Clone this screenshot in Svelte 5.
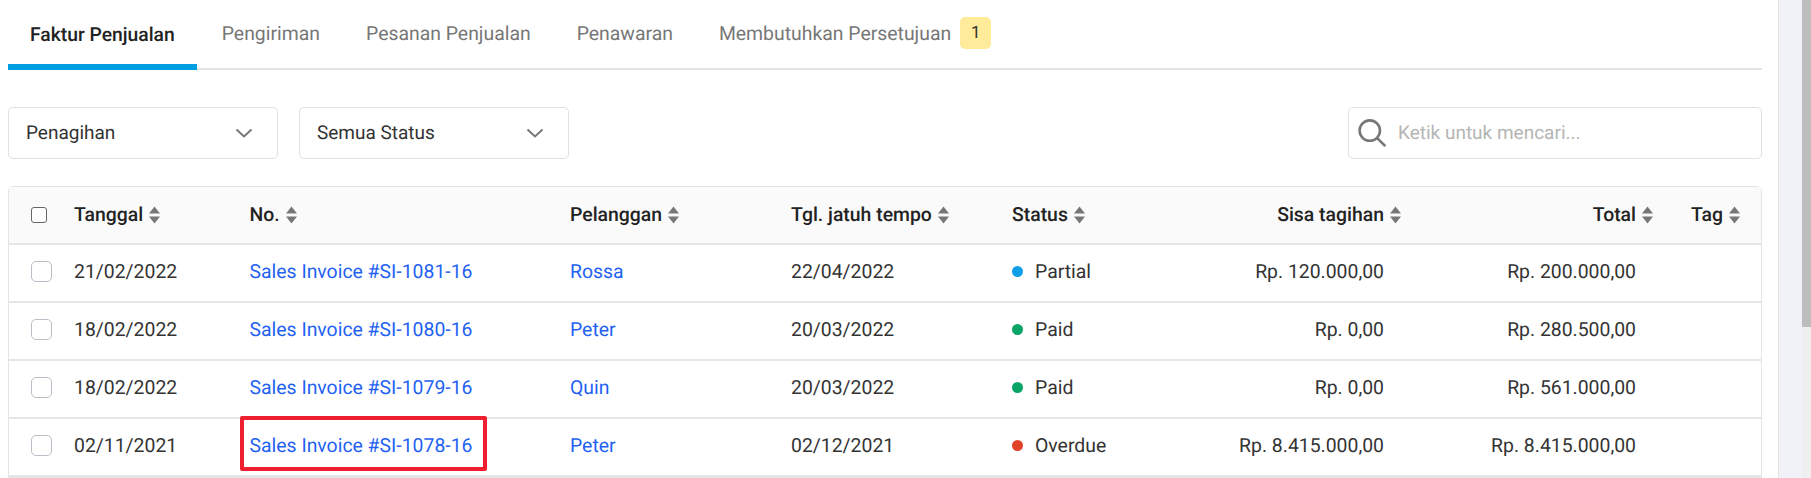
<script>
  const columns = [
    { label: 'Tanggal', cls: 'c-date' },
    { label: 'No.', cls: 'c-no' },
    { label: 'Pelanggan', cls: 'c-cust' },
    { label: 'Tgl. jatuh tempo', cls: 'c-due' },
    { label: 'Status', cls: 'c-status' },
    { label: 'Sisa tagihan', cls: 'c-rest num' },
    { label: 'Total', cls: 'c-total num' },
    { label: 'Tag', cls: 'c-tag' }
  ];
  const rows = [
    { date: '21/02/2022', no: 'Sales Invoice #SI-1081-16', cust: 'Rossa', due: '22/04/2022', status: 'Partial', tone: 'blue', rest: 'Rp. 120.000,00', total: 'Rp. 200.000,00' },
    { date: '18/02/2022', no: 'Sales Invoice #SI-1080-16', cust: 'Peter', due: '20/03/2022', status: 'Paid', tone: 'green', rest: 'Rp. 0,00', total: 'Rp. 280.500,00' },
    { date: '18/02/2022', no: 'Sales Invoice #SI-1079-16', cust: 'Quin', due: '20/03/2022', status: 'Paid', tone: 'green', rest: 'Rp. 0,00', total: 'Rp. 561.000,00' },
    { date: '02/11/2021', no: 'Sales Invoice #SI-1078-16', cust: 'Peter', due: '02/12/2021', status: 'Overdue', tone: 'red', rest: 'Rp. 8.415.000,00', total: 'Rp. 8.415.000,00', marked: true }
  ];
  const tabs = ['Faktur Penjualan', 'Pengiriman', 'Pesanan Penjualan', 'Penawaran', 'Membutuhkan Persetujuan'];
</script>

<div class="page">
  <main class="panel">
    <nav class="tabs">
      {#each tabs as tab, i}
        <div class="tab" class:active={i === 0}>
          {tab}
          {#if i === 4}<span class="badge">1</span>{/if}
        </div>
      {/each}
    </nav>

    <div class="filters">
      <div class="select"><span>Penagihan</span>
        <svg width="18" height="10" viewBox="0 0 18 10"><path d="M1.5 1.5 9 8.5l7.5-7" /></svg>
      </div>
      <div class="select"><span>Semua Status</span>
        <svg width="18" height="10" viewBox="0 0 18 10"><path d="M1.5 1.5 9 8.5l7.5-7" /></svg>
      </div>
      <div class="search">
        <svg width="28" height="28" viewBox="0 0 28 28"><circle cx="11.8" cy="11.6" r="10.2" /><path d="m18.9 18.9 8.4 8.2" /></svg>
        <span>Ketik untuk mencari...</span>
      </div>
    </div>

    <div class="table">
      <div class="row head">
        <div class="c-check"><span class="box small"></span></div>
        {#each columns as col}
          <div class="hcell {col.cls}">
            {col.label}
            <svg class="sort" width="11" height="18" viewBox="0 0 11 18"><path d="M5.5 .5 11 7.5H0zM5.5 17.5 0 10.5h11z" /></svg>
          </div>
        {/each}
      </div>
      {#each rows as row}
        <div class="row">
          <div class="c-check"><span class="box"></span></div>
          <div class="c-date">{row.date}</div>
          <div class="c-no"><a href="#top" class:marked={row.marked}>{row.no}</a></div>
          <div class="c-cust"><a href="#top">{row.cust}</a></div>
          <div class="c-due">{row.due}</div>
          <div class="c-status"><i class="dot {row.tone}"></i>{row.status}</div>
          <div class="c-rest num">{row.rest}</div>
          <div class="c-total num">{row.total}</div>
          <div class="c-tag"></div>
        </div>
      {/each}
    </div>
  </main>
  <div class="scrollbar"><div class="thumb"></div></div>
</div>

<style>
  :global(body) { margin: 0; background: #f0f2f7; overflow: hidden; }
  .page { display: flex; height: 478px; overflow: hidden; font-family: Roboto, sans-serif; font-size: 19.4px; color: #333; text-rendering: geometricPrecision; }
  .panel { width: 1779px; box-sizing: border-box; padding: 0 16px 0 8px; background: #fff; border-right: 1px solid #e4e4e4; flex: none; }
  .tabs { display: flex; gap: 2px; height: 70px; border-bottom: 2px solid #e4e4e4; box-sizing: border-box; }
  .tab { display: flex; align-items: center; height: 70px; box-sizing: border-box; padding: 0 22px 4px; color: #777; font-size: 19.4px; }
  .tab.active { color: #222; font-weight: 500; font-size: 19.3px; margin-right: 1px; border-bottom: 6px solid #009fe3; border-radius: 3px 3px 0 0; padding-top: 4px; padding-bottom: 0; }
  .badge { display: inline-flex; align-items: center; justify-content: center; width: 31px; height: 32px; margin-left: 9px; border-radius: 5px; background: #ffeb99; color: #333; font-size: 17px; }
  .filters { display: flex; gap: 21px; margin-top: 37px; height: 52px; }
  .select { display: flex; align-items: center; justify-content: space-between; width: 270px; box-sizing: border-box; padding: 0 24px 0 17px; border: 1px solid #e1e1e1; border-radius: 5px; font-size: 19px; }
  .select span { padding-bottom: 2px; }
  .select path { fill: none; stroke: #777; stroke-width: 2; }
  .search { display: flex; align-items: center; gap: 12px; width: 414px; margin-left: auto; box-sizing: border-box; padding-left: 9px; border: 1px solid #e1e1e1; border-radius: 5px; color: #b5b5b5; font-size: 19px; }
  .search span { padding-bottom: 1px; }
  .search circle, .search path { fill: none; stroke: #777; stroke-width: 2.6; }
  .table { margin-top: 27px; border: 1px solid #e4e4e4; border-radius: 5px 5px 0 0; }
  .row { display: flex; align-items: center; height: 58px; box-sizing: border-box; padding-bottom: 4px; border-bottom: 2px solid #e6e6e6; }
  .head { background: #fafafa; color: #222; font-weight: 500; padding-bottom: 1px; }
  .hcell { display: flex; align-items: center; gap: 6px; }
  .c-check { width: 65px; flex: none; padding-left: 22px; box-sizing: border-box; display: flex; }
  .c-date { width: 175.5px; flex: none; }
  .c-no { width: 320.5px; flex: none; }
  .c-cust { width: 221px; flex: none; }
  .c-due { width: 221px; flex: none; }
  .c-status { width: 160px; flex: none; display: flex; align-items: center; }
  .num { justify-content: flex-end; text-align: right; }
  .c-rest { width: 212px; flex: none; }
  .c-total { width: 252px; flex: none; }
  .c-tag { margin-left: 55px; flex: none; }
  .sort { fill: #777; flex: none; }
  .hcell.num .sort { margin-right: -17px; }
  .box { display: block; width: 21px; height: 21px; box-sizing: border-box; border: 1px solid #b9bfc8; border-radius: 5px; background: #fff; }
  .box.small { width: 16px; height: 16px; border-color: #666; border-radius: 3px; }
  a { color: #1f62f2; text-decoration: none; position: relative; }
  .marked::after { content: ''; position: absolute; left: -10px; top: -18px; width: 247px; height: 55px; box-sizing: border-box; border: 4px solid #ee2030; border-radius: 2px; }
  .dot { width: 11px; height: 11px; border-radius: 50%; margin-right: 12px; }
  .blue { background: #0f9fe8; }
  .green { background: #0aa566; }
  .red { background: #e04328; }
  .scrollbar { flex: none; width: 32px; display: flex; justify-content: flex-end; }
  .thumb { width: 9px; height: 478px; background: linear-gradient(#bdbdbd 327px, #efefef 327px); }
</style>
